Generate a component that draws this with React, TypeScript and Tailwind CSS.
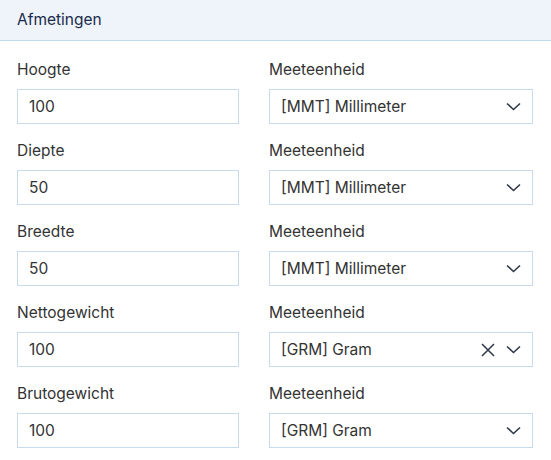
import React from 'react';

interface Row {
  label: string;
  value: string;
  unit: string;
  clearable?: boolean;
}

const rows: Row[] = [
  { label: 'Hoogte', value: '100', unit: '[MMT] Millimeter' },
  { label: 'Diepte', value: '50', unit: '[MMT] Millimeter' },
  { label: 'Breedte', value: '50', unit: '[MMT] Millimeter' },
  { label: 'Nettogewicht', value: '100', unit: '[GRM] Gram', clearable: true },
  { label: 'Brutogewicht', value: '100', unit: '[GRM] Gram' },
];

const Chevron = () => (
  <svg width="15" height="9" viewBox="0 0 15 9" fill="none">
    <path d="M1 1.5l6.5 6 6.5-6" stroke="#2d3748" strokeWidth="1.6" />
  </svg>
);

const Cross = () => (
  <svg width="14" height="14" viewBox="0 0 14 14" fill="none">
    <path d="M1 1l12 12M13 1L1 13" stroke="#2d3748" strokeWidth="1.5" />
  </svg>
);

const App = () => {
  return (
    <div className="min-h-[460px] w-[551px] bg-white font-['Inter',sans-serif] text-[15.5px] text-[#333]">
      <div className="flex h-[41px] items-center border-b border-[#c3d9ee] bg-[#eef4f9] px-[17px]">
        <span className="text-[15.5px] text-[#1a2b4c]">Afmetingen</span>
      </div>
      <div className="grid grid-cols-[222px_264px] gap-x-[30px] px-[17px] pt-[18px]">
        {rows.map((row, index) => (
          <React.Fragment key={index}>
            <div className="flex flex-col pb-[16px]">
              <span className="h-[22px] leading-[22px]">{row.label}</span>
              <div className="mt-[8px] flex h-[35px] items-center border border-[#c8daee] px-[11px]">
                {row.value}
              </div>
            </div>
            <div className="flex flex-col pb-[16px]">
              <span className="h-[22px] leading-[22px]">Meeteenheid</span>
              <div className="mt-[8px] flex h-[35px] items-center border border-[#c8daee] pl-[11px] pr-[11px]">
                <span className="flex-1">{row.unit}</span>
                {row.clearable && (
                  <span className="mr-[11px] flex items-center">
                    <Cross />
                  </span>
                )}
                <Chevron />
              </div>
            </div>
          </React.Fragment>
        ))}
      </div>
    </div>
  );
};

export default App;
